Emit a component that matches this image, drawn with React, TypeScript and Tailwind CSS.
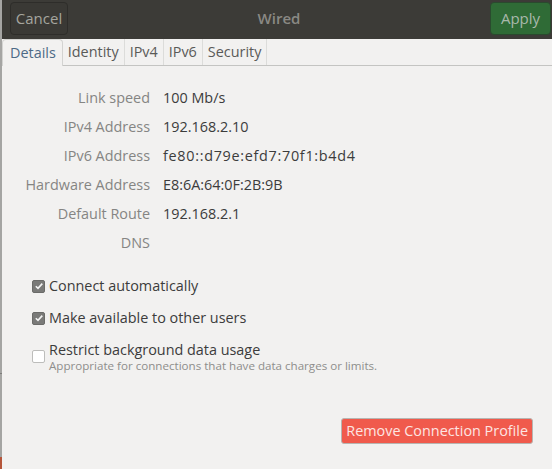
import React from "react";

const font = { fontFamily: '"Open Sans", "Noto Sans", sans-serif' };

function Check({ checked }: { checked: boolean }) {
  return checked ? (
    <div className="w-[13px] h-[13px] rounded-[2px] bg-[#7a7a78] border border-[#6b6b69] flex items-center justify-center shrink-0">
      <svg width="10" height="10" viewBox="0 0 10 10">
        <path d="M1.8 5.2 L4 7.4 L8.3 2.6" stroke="#f4f4f4" strokeWidth="1.6" fill="none" />
      </svg>
    </div>
  ) : (
    <div className="w-[13px] h-[13px] rounded-[2px] bg-white border border-[#bdbdbb] shrink-0" />
  );
}

export default function App() {
  const rows: [string, string, string][] = [
    ["Link speed", "100 Mb/s", ""],
    ["IPv4 Address", "192.168.2.10", ""],
    ["IPv6 Address", "fe80::d79e:efd7:70f1:b4d4", "tracking-[0.7px]"],
    ["Hardware Address", "E8:6A:64:0F:2B:9B", ""],
    ["Default Route", "192.168.2.1", ""],
    ["DNS", "", ""],
  ];
  return (
    <div className="w-[552px] h-[469px] flex bg-[#f2f1f0] overflow-hidden" style={font}>
      <div className="w-[2px] h-full flex flex-col shrink-0">
        <div className="h-[373px] bg-[#a5a5a3]" />
        <div className="h-[1px] bg-[#7d7d7b]" />
        <div className="h-[83px] bg-[#a5a5a3]" />
        <div className="flex-1 bg-[#b5553a]" />
      </div>
      <div className="flex-1 flex flex-col">
        <div className="h-[39px] bg-[#3c3b37] flex items-center justify-between pl-[8px] pr-[1px] pb-[2px]">
          <div className="h-[33px] w-[58px] rounded-[4px] border border-[#2e2d2a] bg-[#3a3935] flex items-center justify-center text-[15px] text-[#a5a59e]">
            Cancel
          </div>
          <div className="text-[15px] font-semibold text-[#8a8984]">Wired</div>
          <div className="h-[33px] w-[61px] rounded-[4px] border border-[#2a4a2e] bg-[#2f6b36] flex items-center justify-center text-[15px] text-[#a9b8ab]">
            Apply
          </div>
        </div>
        <div className="h-[27px] flex items-end border-b border-[#c4c4c2]">
          <div className="h-[27px] pl-[7px] pr-[6px] flex items-center text-[14.4px] text-[#4d6a86] bg-[#f2f1f0] border border-b-0 border-[#d3d3d1] rounded-t-[4px] -mb-[1px]">
            Details
          </div>
          {["Identity", "IPv4", "IPv6", "Security"].map((t) => (
            <div key={t} className="h-[26px] px-[5px] flex items-center text-[14.4px] text-[#5a5a58] border-r border-[#dcdcda]">
              {t}
            </div>
          ))}
        </div>
        <div className="flex flex-col pt-[17px]">
          {rows.map(([k, v, cls]) => (
            <div key={k} className="h-[29px] flex items-center text-[14.4px]">
              <div className="w-[148px] text-right text-[#858583]">{k}</div>
              <div className={"ml-[13px] text-[#3c3c3c] " + cls}>{v}</div>
            </div>
          ))}
        </div>
        <div className="flex flex-col pl-[30px] pt-[13px] text-[14.4px] text-[#3c3c3c]">
          <div className="h-[32px] flex items-center gap-[4px]">
            <Check checked />
            <span>Connect automatically</span>
          </div>
          <div className="h-[32px] flex items-center gap-[4px]">
            <Check checked />
            <span>Make available to other users</span>
          </div>
          <div className="flex gap-[4px] pt-[7px]">
            <div className="pt-[9px]">
              <Check checked={false} />
            </div>
            <div className="flex flex-col">
              <span className="leading-[18px]">Restrict background data usage</span>
              <span className="text-[11.6px] leading-[14px] text-[#8e8e8c]">
                Appropriate for connections that have data charges or limits.
              </span>
            </div>
          </div>
        </div>
        <div className="flex justify-end pr-[19px] mt-[45px]">
          <div className="h-[26px] px-[4px] rounded-[3px] border border-[#b7b5b1] bg-[#f05a4c] flex items-center text-[14.4px] text-[#fde5e2]">
            Remove Connection Profile
          </div>
        </div>
      </div>
    </div>
  );
}
